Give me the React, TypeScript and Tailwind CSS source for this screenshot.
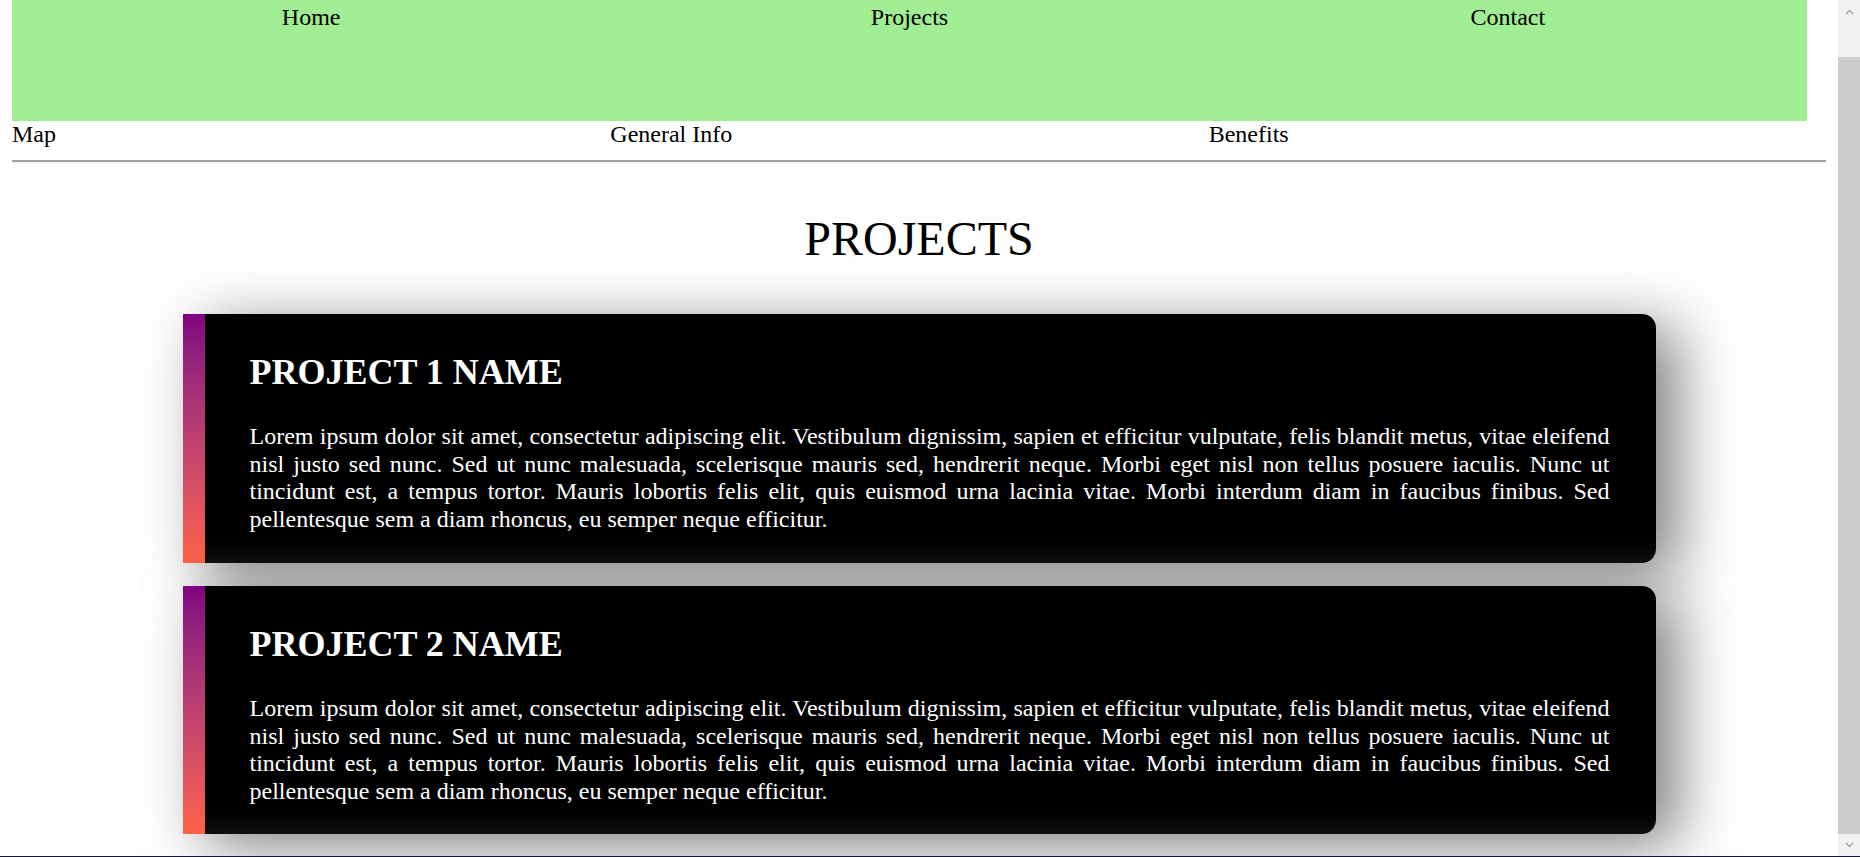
const lorem =
  'Lorem ipsum dolor sit amet, consectetur adipiscing elit. Vestibulum dignissim, sapien et efficitur vulputate, felis blandit metus, vitae eleifend nisl justo sed nunc. Sed ut nunc malesuada, scelerisque mauris sed, hendrerit neque. Morbi eget nisl non tellus posuere iaculis. Nunc ut tincidunt est, a tempus tortor. Mauris lobortis felis elit, quis euismod urna lacinia vitae. Morbi interdum diam in faucibus finibus. Sed pellentesque sem a diam rhoncus, eu semper neque efficitur.'

const projects = [
  { name: 'PROJECT 1 NAME', text: lorem },
  { name: 'PROJECT 2 NAME', text: lorem },
]

function ProjectCard({ name, text }: { name: string; text: string }) {
  return (
    <div className="flex w-[1473px] rounded-r-[14px] shadow-[22px_12px_60px_rgba(0,0,0,0.5)]">
      <div className="w-[22px] shrink-0 bg-linear-to-b from-[#800080] to-[#ff6347]" />
      <div className="flex-1 rounded-r-[14px] bg-linear-to-b from-black from-80% to-[#101010] pl-[45px] pr-[46px] pt-[38px] pb-[29px] text-white">
        <h2 className="mb-[30px] text-[36px] font-bold leading-[41.4px]">{name}</h2>
        <p className="text-justify text-[24px] leading-[27.6px]">{text}</p>
      </div>
    </div>
  )
}

function Chevron({ down }: { down?: boolean }) {
  return (
    <svg width="9" height="6" viewBox="0 0 9 6" className={down ? 'rotate-180' : ''}>
      <path d="M1 5 L4.5 1.5 L8 5" fill="none" stroke="#a3a3a3" strokeWidth="1.4" />
    </svg>
  )
}

export default function App() {
  return (
    <div className="flex h-[857px] flex-col overflow-hidden bg-white font-['Liberation_Serif','Times_New_Roman',serif] text-black">
      <div className="flex min-h-0 flex-1">
        <main className="min-w-0 flex-1 px-[12px]">
          <nav className="w-[1795px] text-[24px] leading-[27.6px]">
            <ul className="grid h-[121px] grid-cols-3 bg-[#a1ed93] pt-[4px] text-center">
              <li>Home</li>
              <li>Projects</li>
              <li>Contact</li>
            </ul>
            <ul className="grid grid-cols-3">
              <li>Map</li>
              <li>General Info</li>
              <li>Benefits</li>
            </ul>
          </nav>
          <div className="mt-[11px] border-t-2 border-b border-t-[#a0a0a0] border-b-[#eeeeee]" />

          <h1 className="mt-[48px] text-center text-[48px] font-normal leading-[55.2px]">PROJECTS</h1>

          <section className="mt-[48px] flex flex-col items-center gap-[23px]">
            {projects.map((p) => (
              <ProjectCard key={p.name} name={p.name} text={p.text} />
            ))}
          </section>
        </main>

        {/* scrollbar */}
        <div className="flex w-[22px] shrink-0 flex-col bg-[#f1f1f1]">
          <div className="flex h-[57px] justify-center pt-[9px]">
            <Chevron />
          </div>
          <div className="flex-1 bg-[#cdcdcd]" />
          <div className="flex h-[22px] items-center justify-center">
            <Chevron down />
          </div>
        </div>
      </div>
      <div className="h-px bg-[#16163a]" />
    </div>
  )
}
